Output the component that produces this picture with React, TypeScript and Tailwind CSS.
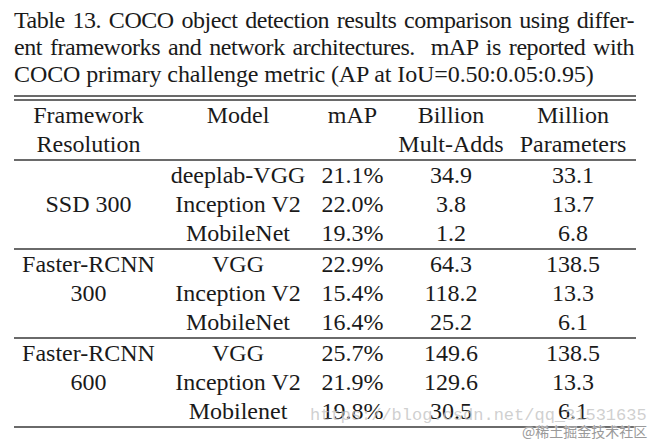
const rows: { fw: [string, string, string]; data: string[][] }[] = [
  {
    fw: ["", "SSD 300", ""],
    data: [
      ["deeplab-VGG", "21.1%", "34.9", "33.1"],
      ["Inception V2", "22.0%", "3.8", "13.7"],
      ["MobileNet", "19.3%", "1.2", "6.8"],
    ],
  },
  {
    fw: ["Faster-RCNN", "300", ""],
    data: [
      ["VGG", "22.9%", "64.3", "138.5"],
      ["Inception V2", "15.4%", "118.2", "13.3"],
      ["MobileNet", "16.4%", "25.2", "6.1"],
    ],
  },
  {
    fw: ["Faster-RCNN", "600", ""],
    data: [
      ["VGG", "25.7%", "149.6", "138.5"],
      ["Inception V2", "21.9%", "129.6", "13.3"],
      ["Mobilenet", "19.8%", "30.5", "6.1"],
    ],
  },
];

const grid =
  "grid grid-cols-[149px_150px_79px_118px_126px] text-center h-[29px] leading-[29px] whitespace-nowrap";

function Rule() {
  return <div className="h-[2px] w-[622px] bg-[#6a6a6a]" />;
}

export default function App() {
  return (
    <div className="relative h-[440px] w-[652px] overflow-hidden bg-white font-['Liberation_Serif',serif] text-[24px] text-[#1a1a1a]">
      <div className="ml-[14px] w-[620px] whitespace-nowrap pt-[7px] leading-[27px]">
        <div className="text-justify tracking-[-0.45px] [word-spacing:-2px] [text-align-last:justify]">
          Table 13. COCO object detection results comparison using differ-
        </div>
        <div className="text-justify tracking-[-0.45px] [word-spacing:-2px] [text-align-last:justify]">
          ent frameworks and network architectures.&nbsp; mAP is reported with
        </div>
        <div className="tracking-[-0.1px]">
          COCO primary challenge metric (AP at IoU=0.50:0.05:0.95)
        </div>
      </div>

      <div className="ml-[14px] mt-[7px] w-[622px]">
        <Rule />
        <div className="h-[2px]" />
        <Rule />
        <div className={grid}>
          <span>Framework</span>
          <span>Model</span>
          <span>mAP</span>
          <span>Billion</span>
          <span>Million</span>
        </div>
        <div className={grid}>
          <span>Resolution</span>
          <span />
          <span />
          <span>Mult-Adds</span>
          <span>Parameters</span>
        </div>
        <Rule />
        {rows.map((section, si) => (
          <div key={si}>
            {section.data.map((r, ri) => (
              <div key={ri} className={grid}>
                <span>{section.fw[ri]}</span>
                {r.map((cell, ci) => (
                  <span key={ci}>{cell}</span>
                ))}
              </div>
            ))}
            <Rule />
          </div>
        ))}
      </div>

      {/* watermarks */}
      <div className="absolute left-[310px] top-[406px] font-['Liberation_Mono',monospace] text-[17px] leading-[20px] text-[#c4c4c4]/80">
        https://blog.csdn.net/qq_31531635
      </div>
      <div className="absolute left-[522px] top-[423px] font-['Noto_Sans_CJK_SC',sans-serif] text-[14px] leading-[17px] text-[#9a9a9a] [text-shadow:0_0_2px_#fff,0_0_1px_#fff]">
        @稀土掘金技术社区
      </div>
    </div>
  );
}
